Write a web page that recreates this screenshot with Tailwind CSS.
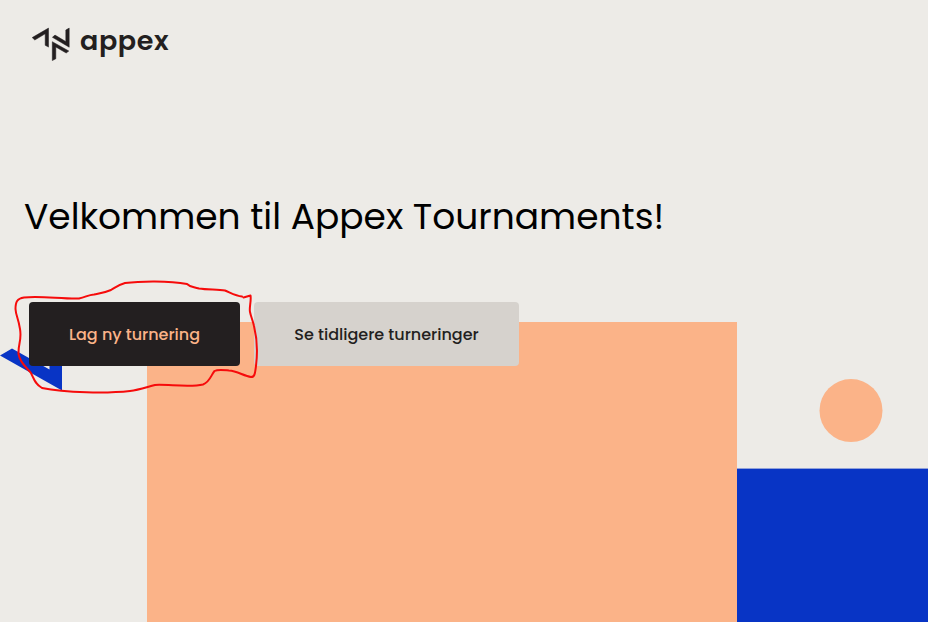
<!DOCTYPE html>
<html lang="no">
<head>
<meta charset="utf-8">
<title>Appex Tournaments</title>
<script src="https://cdn.jsdelivr.net/npm/@tailwindcss/browser@4"></script>
</head>
<body class="relative h-[622px] w-[928px] overflow-hidden bg-[#edebe7] font-[Poppins,Inter,sans-serif]">
  <!-- Decorative background -->
  <svg class="absolute inset-0" width="928" height="622" viewBox="0 0 928 622" aria-hidden="true">
    <path fill="#0834c5" d="M12 348.5 49.500 369.5V330H62V390.5L0 355.5Z"/>
    <rect x="147" y="322" width="590" height="300" fill="#fbb388"/>
    <rect x="737" y="468.6" width="191" height="154" fill="#0834c5"/>
    <circle cx="851" cy="410.6" r="31.5" fill="#fbb388"/>
  </svg>
  <div class="relative">
    <header class="flex h-[84px] items-start pt-[27px] pl-8">
      <svg width="38" height="35" viewBox="32 27 38 35" fill="#231f20" stroke="#231f20" stroke-width=".5" aria-hidden="true">
        <path d="M32.200 37.6 48.5 28.1V47.1L45.2 45.3V33.8L34.8 40Z"/>
        <path d="M69.2 28.1V47.2L52.4 37.3 55 35.1 65.8 41.6V30Z"/>
        <path d="M52.3 41.7 68.800 51 66.2 53 55.8 47V58.8L52.3 60.6Z"/>
      </svg>
      <span class="ml-2.5 text-[27px] leading-[27px] font-semibold tracking-[0.6px] text-[#231f20]">appex</span>
    </header>
    <main>
      <h1 class="mt-[106px] ml-6 h-[60px] text-[36px] leading-[54px] whitespace-nowrap text-black">Velkommen til Appex Tournaments!</h1>
      <div class="mt-[52px] ml-[29px] flex gap-3.5">
        <button class="flex h-16 w-[211px] items-center justify-center rounded bg-[#231f20] pt-0.5 text-base font-medium text-[#fbb388]">Lag ny turnering</button>
        <button class="flex h-16 w-[265px] items-center justify-center rounded bg-[#d6d2cd] pt-0.5 text-base font-medium text-[#231f20]">Se tidligere turneringer</button>
      </div>
    </main>
  </div>
  <!-- Hand-drawn highlight around the primary action -->
  <svg class="pointer-events-none absolute inset-0" width="928" height="622" fill="none" stroke="#f60b0b" stroke-width="2" stroke-linecap="round" stroke-linejoin="round" aria-hidden="true">
    <path d="M243.500 297.500 250.500 295.500C251.500 301 249 307 250 312C251 317 253 321 254 326C257 338 257.500 354 256 366C255 373 255 377 251 377C244 376 237 371 229 370.500C224 370 218 369 214.500 371C211 375 210 382 203 384.500C190 388 167 384 155 385C147 387 139 390 130 391C108 393.500 65 393 42 388C35 384 34 379 31 373C27 368 20 363 18.500 354C18 344 22 340 20 329C18 317 16 316 15.500 309C15.500 302 17 298.500 24 297.500C40 295.500 61 299 79 298.500C86 297 88 295 94 294.500C101 293 105 292.500 111 290C116 287 118 285 125 283C140 281 169 280.500 187 284C190 287 192 286.500 199 288.500C208 290 218 289 225 290.500C231 293 236 296 242 296.500"/>
  </svg>
</body>
</html>
